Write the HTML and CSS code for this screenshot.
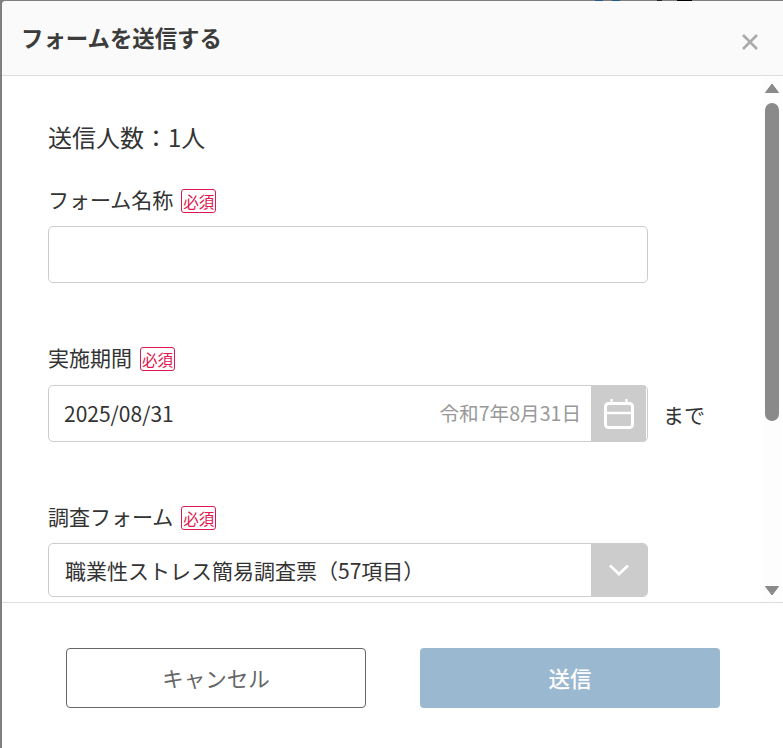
FILE: index.html
```html
<!DOCTYPE html>
<html lang="ja">
<head>
    <meta charset="UTF-8">
    <title>フォームを送信する</title>
    <link rel="stylesheet" href="styles.css">
</head>
<body>
    <div class="modal">
        <div class="modal_header">
            <h2 class="modal_title">フォームを送信する</h2>
            <svg class="close_icon" width="18" height="18" viewBox="0 0 18 18">
                <path d="M2 2 L16 16 M16 2 L2 16" stroke="#aaaaaa" stroke-width="2.6" fill="none"/>
            </svg>
        </div>
        <div class="modal_body">
            <div class="body_content">
                <p class="send_count">送信人数：1人</p>

                <div class="field field_name">
                    <div class="field_label">フォーム名称<span class="required">必須</span></div>
                    <input class="text_input" type="text">
                </div>

                <div class="field field_date">
                    <div class="field_label">実施期間<span class="required">必須</span></div>
                    <div class="date_row">
                        <div class="input_box date_box">
                            <span class="input_value">2025/08/31</span>
                            <span class="wareki">令和7年8月31日</span>
                            <span class="addon">
                                <svg width="30" height="30" viewBox="0 0 30 30">
                                    <rect x="1.500" y="4.500" width="27" height="24" rx="3" fill="none" stroke="#fff" stroke-width="3"/>
                                    <path d="M1 14 H29" stroke="#fff" stroke-width="2.500" fill="none"/>
                                    <path d="M7.500 0 V6 M22.500 0 V6" stroke="#fff" stroke-width="2.200" fill="none"/>
                                </svg>
                            </span>
                        </div>
                        <span class="until">まで</span>
                    </div>
                </div>

                <div class="field field_form">
                    <div class="field_label">調査フォーム<span class="required">必須</span></div>
                    <div class="input_box select_box">
                        <span class="input_value">職業性ストレス簡易調査票（57項目）</span>
                        <span class="addon">
                            <svg width="22" height="14" viewBox="0 0 22 14">
                                <path d="M2 2.500 L11 11 L20 2.500" stroke="#fff" stroke-width="2.800" fill="none"/>
                            </svg>
                        </span>
                    </div>
                </div>
            </div>
            <div class="scrollbar">
                <svg class="arrow" width="16" height="12" viewBox="0 0 16 12"><path d="M8 2 L14.500 10.500 H1.500 Z" fill="#8a8a8a" stroke="#8a8a8a" stroke-linejoin="round"/></svg>
                <div class="track"><div class="thumb"></div></div>
                <svg class="arrow" width="16" height="12" viewBox="0 0 16 12"><path d="M1.500 1.500 H14.500 L8 10 Z" fill="#8a8a8a" stroke="#8a8a8a" stroke-linejoin="round"/></svg>
            </div>
        </div>
        <div class="modal_footer">
            <button class="btn btn_cancel" type="button">キャンセル</button>
            <button class="btn btn_send" type="button">送信</button>
        </div>
    </div>
</body>
</html>
```

FILE: styles.css
```css
html, body {
    margin: 0;
    padding: 0;
    height: 100%;
    overflow: hidden;
    font-family: "Noto Sans CJK JP", "Noto Sans", sans-serif;
    color: #333333;
}

/* dimmed page behind the modal, only its top edge shows */
body {
    background-color: #7f7f7f;
    background-image: linear-gradient(to right,
        #7f7f7f 595px, #1d5c8c 595px, #1d5c8c 603px, #7f7f7f 603px,
        #7f7f7f 612px, #1d5c8c 612px, #1d5c8c 620px, #7f7f7f 620px,
        #7f7f7f 657px, #222222 657px, #222222 662px, #7f7f7f 662px,
        #7f7f7f 677px, #000000 677px, #000000 692px, #7f7f7f 692px);
    background-size: 100% 1px;
    background-repeat: no-repeat;
}

.modal {
    box-sizing: border-box;
    height: 100%;
    margin: 1px 0 0 2px;
    background-color: #ffffff;
    display: flex;
    flex-direction: column;
    border-radius: 4px 0 0 0;
}

.modal_header {
    height: 74px;
    flex: none;
    display: flex;
    justify-content: space-between;
    background-color: #fafafa;
    border-bottom: 1px solid #dddddd;
    border-radius: 4px 0 0 0;
}

.modal_title {
    margin: 19px 0 0 19px;
    font-size: 22.400px;
    line-height: 34px;
    font-weight: 700;
    color: #3c3c3c;
}

.close_icon {
    margin: 32px 24px 0 0;
}

.modal_body {
    height: 526px;
    flex: none;
    display: flex;
    overflow: hidden;
    border-bottom: 1px solid #dddddd;
}

.body_content {
    flex: 1;
    padding: 44px 0 0 46px;
}

.send_count {
    margin: 0;
    font-size: 24px;
    line-height: 34px;
}

.field_label {
    display: flex;
    align-items: center;
    font-size: 21px;
    line-height: 28px;
}

.required {
    margin: 4px 0 0 8px;
    width: 35px;
    height: 24px;
    box-sizing: border-box;
    border: 1px solid #e0184f;
    border-radius: 3px;
    color: #e0184f;
    background-color: #ffffff;
    font-size: 15.500px;
    line-height: 22px;
    text-align: center;
    white-space: nowrap;
}

.field_name {
    margin-top: 31px;
}

.field_date {
    margin-top: 60px;
}

.field_form {
    margin-top: 60px;
}

.text_input {
    display: block;
    box-sizing: border-box;
    width: 600px;
    height: 57px;
    margin-top: 13px;
    border: 1px solid #cccccc;
    border-radius: 5px;
    background-color: #ffffff;
}

.date_row {
    display: flex;
    align-items: center;
    margin-top: 14px;
}

.input_box {
    box-sizing: border-box;
    width: 600px;
    height: 57px;
    display: flex;
    align-items: center;
    border: 1px solid #cccccc;
    border-radius: 5px;
    background-color: #ffffff;
    overflow: hidden;
}

.input_value {
    flex: 1;
    padding-left: 15px;
    font-size: 21px;
}

.wareki {
    margin-right: 10px;
    font-size: 19.600px;
    color: #999999;
}

.addon {
    width: 55px;
    height: 100%;
    display: flex;
    align-items: center;
    justify-content: center;
    background-color: #cccccc;
}

.date_box {
    overflow: visible;
}

.date_box .input_value,
.date_box .wareki {
    padding-bottom: 2px;
}

.date_box .addon {
    margin-right: 1px;
}

.until {
    margin-left: 15px;
    font-size: 21px;
}

.select_box {
    height: 54px;
    margin-top: 13px;
}

.select_box .input_value {
    padding-left: 16px;
}

.select_box .addon {
    width: 56px;
}

.scrollbar {
    width: 18px;
    flex: none;
    margin-right: 2px;
    display: flex;
    flex-direction: column;
    align-items: center;
    background-color: #fdfdfd;
    padding: 6px 0 5px;
}

.track {
    flex: 1;
    width: 100%;
    padding-top: 9px;
}

.thumb {
    width: 14px;
    height: 318px;
    margin: 0 auto;
    border-radius: 7px;
    background-color: #8a8a8a;
}

.modal_footer {
    flex: 1;
    display: flex;
    gap: 54px;
    padding: 45px 0 0 64px;
}

.btn {
    width: 300px;
    height: 60px;
    padding-bottom: 3px;
    border-radius: 4px;
    font-family: inherit;
    font-size: 21.500px;
    font-weight: 400;
}

.btn_cancel {
    background-color: #ffffff;
    border: 1px solid #666666;
    color: #666666;
}

.btn_send {
    background-color: #9ab8cf;
    border: none;
    color: #ffffff;
    font-weight: 500;
}
```
